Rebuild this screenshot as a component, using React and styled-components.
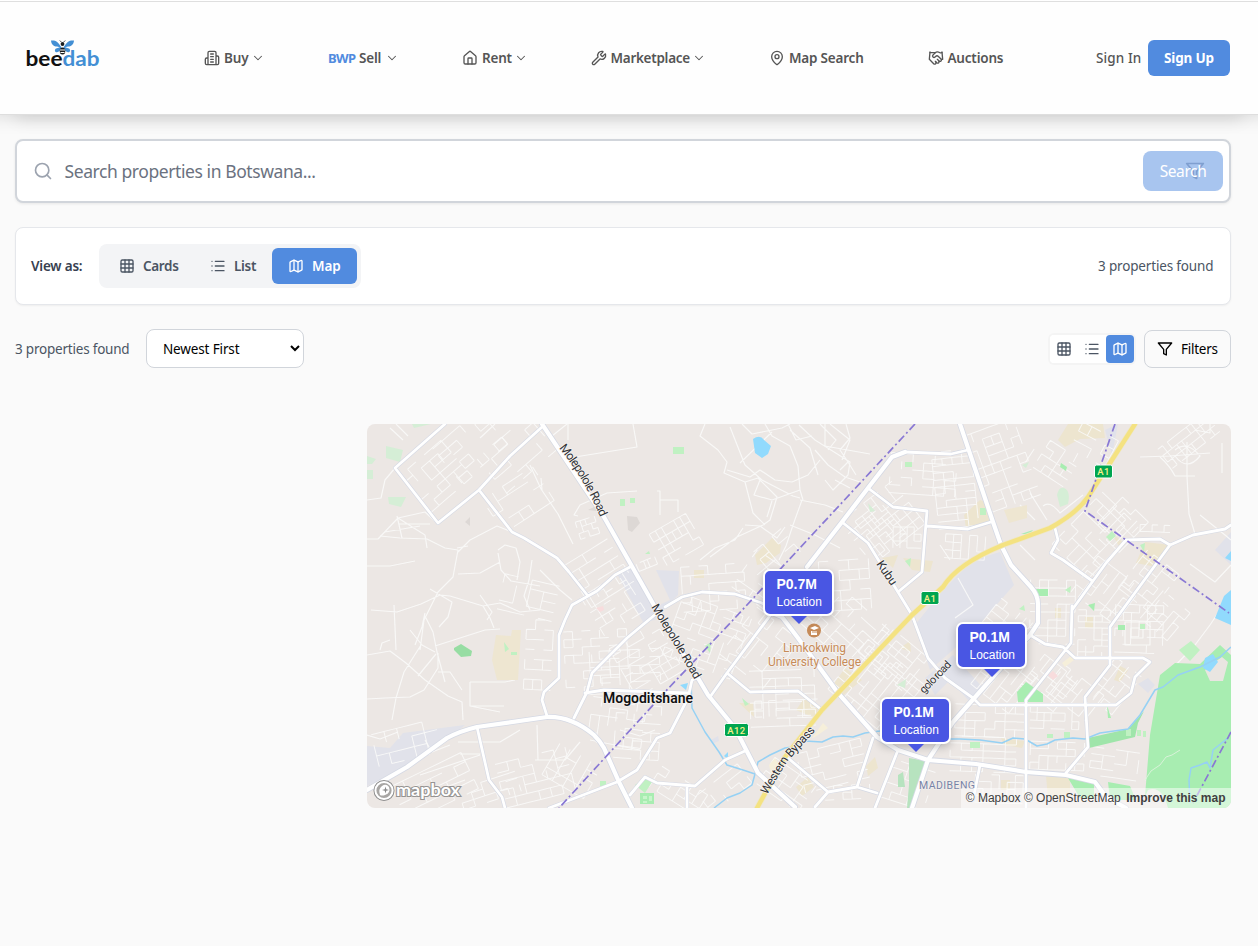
import React from "react";
import styled, { createGlobalStyle } from "styled-components";
import { ChevronDown, House, Wrench, MapPin, Handshake, Search, Grid3x3, List, Map as MapIcon } from "lucide-react";

const Global = createGlobalStyle`
  * { box-sizing: border-box; }
  body { margin: 0; background: #fafafa; color: #4b5563; font-family: "Noto Sans", "Open Sans", sans-serif; font-size: 13.5px; }
  button, select { font: inherit; }
`;
const Page = styled.div`height: 946px; overflow: hidden; background: #fafafa;`;
const Header = styled.header`
  height: 115px; display: flex; align-items: center; padding: 0 28px 0 16px;
  border-top: 1px solid #fff; border-bottom: 1px solid #dedede;
  background: linear-gradient(#dfdfdf, #dfdfdf) 0 0 / 100% 1px no-repeat, #fefefe;
  box-shadow: -16px 4px 16px rgba(0, 0, 0, 0.1), 16px 4px 16px rgba(0, 0, 0, 0.1);
`;
const LogoBox = styled.div`width: 188px; height: 95px; display: flex; align-items: center; svg { display: block; }`;
const Nav = styled.nav`display: flex; flex: 1;`;
const NavItem = styled.a`
  width: ${(p) => p.$width}px; display: flex; align-items: center; height: 20px; color: #555; font-weight: 600;
  svg { flex: none; }
`;
const Text = styled.span`
  width: ${(p) => p.$width}px; flex: none; white-space: nowrap; letter-spacing: ${(p) => p.$track || 0}px;
  margin-left: ${(p) => p.$left || 0}px;
`;
const ViewLabel = styled(Text)`color: #374151; font-weight: 600;`;
const Currency = styled.b`color: #518bdf; font-size: 13px; font-weight: 700; width: 31px; letter-spacing: -0.6px;`;
const SignIn = styled.a`width: 52px; color: #555; font-weight: 500; letter-spacing: 0.1px; white-space: nowrap;`;
const SignUp = styled.button`
  width: 82px; height: 36px; padding: 0; border: 0; border-radius: 6px; background: #518bdf; color: #fff; font-weight: 700; letter-spacing: -0.15px;
`;
const Main = styled.main`padding: 24px 27px 0 15px;`;
const SearchBar = styled.div`
  height: 64px; border: 2px solid #d1d5db; border-radius: 8px; background: #fff; display: flex; align-items: center;
  padding: 0 6px 0 16px; box-shadow: 0 1px 3px rgba(0, 0, 0, 0.08); color: #9ca3af;
`;
const Placeholder = styled.span`flex: 1; margin-left: 11.5px; font-size: 17.5px; letter-spacing: ${(p) => p.$track}px; color: #6b7280;`;
const SearchButton = styled.button`
  width: 80px; height: 40px; padding: 0; border: 0; border-radius: 8px; background: #a8c5ef; color: #fff; font-size: 15.5px; letter-spacing: -0.4px; position: relative;
  svg { position: absolute; left: 42px; top: 10px; color: #7f9fd0; }
  span { position: relative; z-index: 1; }
`;
const ViewCard = styled.section`
  margin-top: 24px; height: 78px; border: 1px solid #e5e7eb; border-radius: 8px; background: #fff; padding: 0 16px 0 15px;
  display: flex; align-items: center; box-shadow: 0 1px 2px rgba(0, 0, 0, 0.05);
`;
const Segments = styled.div`display: flex; padding: 4px; border-radius: 8px; background: #f3f4f6; height: 44px; width: 262px;`;
const Segment = styled.button`
  width: ${(p) => p.$width}px; border: 0; border-radius: 6px; padding: 0 0 0 16px; display: flex; align-items: center; gap: 8px;
  font-weight: 600; letter-spacing: ${(p) => p.$track}px;
  background: ${(p) => (p.$on ? "#518bdf" : "transparent")}; color: ${(p) => (p.$on ? "#fff" : "#4b5563")};
`;
const Spacer = styled.div`flex: 1;`;
const SortRow = styled.div`margin-top: 24px; height: 39px; display: flex; align-items: center;`;
const Select = styled.select`
  width: 158px; height: 39px; border: 1px solid #d1d5db; border-radius: 8px; background: #fff; color: #000; padding: 0 0 0 12px; letter-spacing: -0.14px;
`;
const IconGroup = styled.div`display: flex; border-radius: 4px; background: #fff; box-shadow: 0 0 0 2px #f4f4f4; margin-right: 10px;`;
const IconButton = styled.button`
  width: 28px; height: 28px; padding: 6px; border: 0; border-radius: 4px; display: flex;
  background: ${(p) => (p.$on ? "#518bdf" : "#fff")}; color: ${(p) => (p.$on ? "#fff" : "#4b5563")};
`;
const FilterButton = styled.button`
  width: 87px; height: 38px; padding: 0 0 0 12px; border: 1px solid #d1d5db; border-radius: 8px; background: transparent; color: #000;
  display: flex; align-items: center; gap: 8px; letter-spacing: -0.25px;
`;
const MapPanel = styled.section`
  position: relative; margin: 56px 0 0 352px; width: 864px; height: 384px; border-radius: 8px; overflow: hidden; background: #ece7e4;
  > svg { display: block; }
`;
const Pin = styled.div`
  position: absolute; left: ${(p) => p.$x}px; top: ${(p) => p.$y}px; width: 71px; height: 47px; border: 2px solid #fff; border-radius: 7px;
  background: #4956e3; color: #fff; padding: 4px 0 0 11.5px; font: 12px/17px "Liberation Sans", Arial, sans-serif; box-shadow: 0 3px 9px rgba(0,0,0,.22);
  b { display: block; font-size: 14px; line-height: 19px; }
  &::after { content: ""; position: absolute; left: 26px; top: 45px; border: 8px solid transparent; border-top-color: #4956e3; border-bottom: 0; }
`;
const Attribution = styled.div`
  position: absolute; right: 0; bottom: 0; height: 20px; padding: 0 5.5px 0 5px; background: rgba(255,255,255,.5); color: #404040;
  font: 12px/20px "Liberation Sans", Arial, sans-serif; white-space: nowrap; b { margin-left: 2px; }
`;

const Filter = ({ size = 16 }) => (
  <svg width={size} height={size} viewBox="0 0 24 24" fill="none" stroke="currentColor" strokeWidth="2" strokeLinecap="round" strokeLinejoin="round">
    <polygon points="22 3 2 3 10 12.46 10 19 14 21 14 12.46 22 3" />
  </svg>
);
const Building = () => (
  <svg width="16" height="16" viewBox="0 0 24 24" fill="none" stroke="currentColor" strokeWidth="2" strokeLinecap="round" strokeLinejoin="round">
    <path d="M6 22V4a2 2 0 0 1 2-2h8a2 2 0 0 1 2 2v18ZM6 12H4a2 2 0 0 0-2 2v6a2 2 0 0 0 2 2h2M18 9h2a2 2 0 0 1 2 2v9a2 2 0 0 1-2 2h-2M10 6h4M10 10h4M10 14h4M10 18h4" />
  </svg>
);
const Chevron = () => <ChevronDown size={14} strokeWidth={1.8} />;
const Logo = () => (
  <svg width="95" height="95" viewBox="16 10 95 95">
    <g fill="#438fd4">
      <path d="M61.5 47.5C58 41 55 40 51 40.5c.3 4 3 6 6 6l3 .7-4 1.2c-2 1.5-1 4 1 3.8 2-.2 3.5-2 4.5-4.7zM63.5 47.5C67 41 70 40 74 40.500c-.3 4-3 6-6 6l-3 .7 4 1.200c2 1.500 1 4-1 3.800-2-.2-3.500-2-4.500-4.700z" />
    </g>
    <g fill="#181b1d"><circle cx="62.5" cy="44" r="1.9" /><ellipse cx="62.5" cy="51" rx="2.8" ry="3.6" /></g>
    <path d="M61.3 42l-1.500-1.500M63.700 42l1.500-1.500" stroke="#222" strokeWidth=".8" />
    <path d="M60 50h5M60.5 52.500h4" stroke="#fff" />
    <text x="25.500" y="66" fontFamily="Lato, sans-serif" fontWeight="700" fontSize="20.5" textLength="37" lengthAdjust="spacingAndGlyphs" fill="#111">bee</text>
    <text x="62.500" y="66" fontFamily="Lato, sans-serif" fontWeight="700" fontSize="20.5" textLength="37" lengthAdjust="spacingAndGlyphs" fill="#438fd4">dab</text>
  </svg>
);

/* Residential street blocks: [x, y, width, height, angle, cell width, cell height, share of edges drawn] */
const blocks = [
  [410, 450, 60, 55, -41, 11, 8, 0.6], [440, 424, 60, 45, -41, 12, 9, 0.5], [485, 430, 70, 50, -41, 11, 9, 0.55], [490, 478, 65, 48, -33, 12, 10, 0.5],
  [578, 518, 24, 22, -18, 5, 6, 0.75], [575, 548, 50, 52, -32, 10, 10, 0.65], [590, 580, 52, 50, -32, 8, 9, 0.65], [565, 630, 70, 65, -3, 9, 8, 0.6],
  [500, 580, 60, 38, 13, 14, 9, 0.5], [525, 620, 34, 75, 3, 9, 10, 0.55], [590, 650, 70, 38, -3, 10, 8, 0.65], [590, 700, 55, 45, 8, 9, 9, 0.6],
  [620, 630, 60, 60, -30, 9, 8, 0.65], [615, 705, 45, 55, 4, 9, 9, 0.55], [395, 765, 90, 40, -26, 13, 10, 0.7], [500, 755, 72, 50, -14, 12, 9, 0.65],
  [545, 755, 58, 44, 30, 12, 9, 0.6], [460, 780, 60, 24, -18, 12, 7, 0.6], [375, 725, 75, 40, -14, 13, 11, 0.65],
  [655, 520, 48, 36, -30, 7, 9, 0.8], [637, 560, 20, 9, -22, 4, 8, 0.8], [682, 565, 65, 45, -4, 9, 9, 0.6], [670, 605, 75, 68, 20, 9, 8, 0.7],
  [740, 560, 50, 45, 35, 10, 9, 0.6], [750, 540, 48, 35, -40, 12, 10, 0.5], [820, 560, 52, 50, -4, 10, 10, 0.6], [810, 600, 70, 55, 42, 10, 9, 0.5],
  [730, 620, 60, 55, -52, 12, 11, 0.6], [750, 670, 70, 60, -2, 13, 8, 0.65], [755, 700, 65, 20, -2, 7, 8, 0.7], [860, 490, 60, 55, -38, 9, 9, 0.75],
  [890, 455, 70, 40, 4, 11, 8, 0.65], [855, 515, 45, 38, -40, 9, 9, 0.65], [893, 527, 28, 27, 1, 7, 7, 0.9], [935, 450, 48, 78, -6, 10, 7, 0.75],
  [945, 535, 40, 24, 4, 8, 8, 0.75], [975, 424, 60, 85, -20, 9, 9, 0.65], [1030, 445, 45, 34, 33, 9, 8, 0.65], [1070, 430, 45, 45, 28, 10, 10, 0.65],
  [1160, 428, 60, 28, -38, 6, 8, 0.8], [1060, 510, 72, 52, -46, 9, 10, 0.75], [1100, 505, 46, 38, -46, 7, 9, 0.75], [1140, 525, 35, 12, 2, 6, 7, 0.75],
  [1085, 560, 50, 60, -53, 9, 9, 0.75], [1030, 580, 50, 70, 1, 9, 8, 0.8], [980, 605, 55, 48, -52, 8, 8, 0.75], [1125, 560, 50, 42, -52, 8, 8, 0.7],
  [1078, 610, 36, 48, 1, 8, 6, 0.8], [1115, 605, 55, 48, 2, 8, 8, 0.75], [1148, 595, 42, 40, -50, 9, 7, 0.65], [845, 650, 65, 75, -51, 8, 9, 0.8],
  [875, 628, 45, 60, -51, 7, 9, 0.75], [1028, 660, 45, 42, -52, 8, 7, 0.8], [1060, 665, 38, 55, -52, 8, 7, 0.75], [1090, 667, 54, 35, -52, 8, 8, 0.75],
  [980, 655, 50, 48, -52, 8, 8, 0.8], [955, 705, 70, 32, 2, 10, 8, 0.8], [1030, 705, 52, 26, 2, 7, 8, 0.8], [950, 737, 74, 38, 2, 11, 7, 0.7],
  [1030, 742, 54, 34, 2, 9, 7, 0.75], [1090, 750, 52, 30, 8, 12, 7, 0.7], [975, 775, 50, 30, 2, 8, 7, 0.7], [800, 745, 70, 42, -14, 11, 8, 0.7],
  [760, 770, 55, 35, 35, 10, 8, 0.7], [885, 765, 48, 42, 18, 9, 8, 0.6], [825, 785, 50, 20, -3, 9, 7, 0.55], [650, 780, 60, 28, 32, 9, 8, 0.55],
  [700, 775, 55, 26, -38, 10, 8, 0.55],
];
function streetGrid([x, y, w, h, angle, cw, ch, share], seed) {
  let s = seed * 7919 + 13;
  const rnd = () => { s = (s * 1103515245 + 12345) % 2147483648; return s / 2147483648; };
  let d = "";
  for (let j = 0; j * ch <= h; j++)
    for (let i = 0; i * cw <= w; i++) {
      if (rnd() < share && (i + 1) * cw <= w) d += `M${i * cw} ${j * ch}h${cw}`;
      if (rnd() < share * 0.75 && (j + 1) * ch <= h) d += `M${i * cw} ${j * ch}v${ch}`;
    }
  return <path key={seed} d={d} transform={`translate(${x + w / 2} ${y + h / 2}) rotate(${angle}) translate(${-w / 2} ${-h / 2})`} />;
}
const tracks = `M395 468L385 480 381 498 367 500M367 539H378L398 518 425 512 437 523M380 536L400 538 427 539 445 548 458 550 453 577 438 592 424 620 420 650M398 518L425 535 427 548M457 548L468 546M458 552L470 540 497 526 512 532M399 524H430M385 532L420 526M397 516L402 538
M371 610L397 612 421 604 440 595 450 596 483 606 500 603 520 612 540 610M430 589L452 602 448 617 439 627M458 574L480 573 500 562M498 550L505 545 516 548 520 562 517 580M498 553L501 570 511 581 540 586M483 606L490 618 494 628M480 595L492 612 487 620M532 560L529 580 524 596 530 610M540 570L560 590 572 600
M367 655L390 651 406 663 425 680 448 696 462 702 463 720M367 699L385 698 410 697 424 690 438 668 438 653M425 613L422 627 415 645M425 616L433 632 437 652 445 682M435 646L485 630 500 629M367 735L380 739 398 732M380 650L382 643 390 640M470 682H505L515 680M470 682V706H504M470 706L500 712M410 630L422 645 435 652M421 645L404 672 396 698 392 720M436 654L418 676M438 672H450L462 690
M495 424L480 438M567 424L552 436M568 440V424M570 455L574 464M575 457L637 447 633 424M637 491L607 493 580 505 574 515 578 516M367 566H390L415 561M394 605L396 650M530 465L541 489 558 514 573 544M541 478L542 490M390 428L403 440M396 424L408 436
M705 424L700 436 718 450 727 462 724 473 745 482 758 478 777 497 770 520 763 525 737 537 710 557M730 427L745 465 762 480 793 496 800 498M765 424L772 436 790 446 798 466 800 490 803 500M799 425L815 440 850 462 848 475 833 490 825 480M830 424L850 440 842 460M790 430L810 448 818 475M800 500L825 505 843 512M745 482L753 513 765 525M802 500L793 525 786 546 779 560M740 463L772 432M657 491H660L660 515M660 500H678V512
M727 470L750 477 760 470 775 480 792 482 808 475 820 460M760 480L754 495 772 500 800 490M772 501L767 517M815 450L828 465 845 477 860 482M840 470L848 462 856 475M835 480L850 488M846 424L850 438 840 450 848 462M820 424L836 440 828 450M788 424L796 440 812 436M742 424L752 434 782 428 790 424
M745 525L760 526 777 538 785 527M743 528L735 540 715 548 700 560M790 525L815 535 840 548M825 424V446L870 454
M1140 457L1170 456 1210 453M1187 442V476M1160 457Q1170 466 1175 476H1195M1187 476L1189 514 1195 534M1222 443V473M1210 424V433L1195 430M1175 450Q1187 440 1200 456Q1187 472 1175 456M1200 515L1225 535 1231 540M1190 564L1215 582 1231 565M958 578L973 605 955 618
M1171 670L1195 645 1210 625 1220 610M940 545L950 560M1020 545L1035 560M1083 495L1060 513Q1050 500 1043 506M1020 505L1035 520M1030 493L1047 520M1145 780L1160 765 1170 755 1180 750M425 740L432 752 450 745M458 742H500L520 730M460 754H480M537 725L538 760M590 740L640 750M620 730L640 736 655 730M535 760L565 760 580 742M420 775L480 755M430 793L465 780M1125 622H1150V645H1125ZM1131 628H1143V638H1131Z`;
const roads = `M445 424L395 468 438 523 479 490 510 456 542 427M479 490L512 532 524 538 557 558 569 572 588 596M630 567L615 575 597 591 572 605 565 620 559 635 559 678 544 692 542 700 547 716M477 727L489 780 502 797 505 808M657 613L627 638 592 673 587 692 574 718M585 693L604 690 657 692 688 693M549 808L617 782 637 770 657 738 670 733 688 698 692 680 697 678M630 795L645 777 657 783 695 786 725 760 745 751M687 787V808
M665 607L682 597 702 592 735 594 762 603 782 617M772 613L727 673 710 697M868 488L893 507 927 511 922 572 898 592M927 526L968 529 991 522M842 522L868 543 912 615 928 658 945 678 973 698 980 705H1116L1131 693 1135 677 1150 662 1143 658H1075L1063 647 1045 644 1030 635M1072 610L1106 563 1126 540 1160 539 1170 545M1072 606L1071 643 1026 700V808M1231 525L1225 529 1193 535 1170 545 1115 620 1110 627V665L1085 697 1088 747 1066 773M1055 528L1058 540 1051 553 1063 560 1091 580M727 673L750 692 798 691 822 710M788 758L828 792 857 787 877 793M873 738L857 787M828 792L815 807M898 750L875 808M980 765L973 800M892 457L905 452 951 454 968 450`;
const highways = `M542 424L604 517 655 607 698 678 708 695 735 728 758 773 795 807M367 790L407 767 447 738 Q460 731 477 727L547 717Q571 716 594 735 600 741 604 748L619 782 632 808M770 612L782 617 798 638 838 693 877 737 898 750 928 760 976 764 1026 772 1066 775 1095 782 1106 797 1126 808M807 567L842 522 868 488 892 457 905 452M960 424L993 522 1001 545 1011 565 1031 587Q1038 595 1038 604V623L1030 635 993 677 953 722 928 760 912 808`;
const expressway = "M1135 424L1110 463 1088 497Q1077 513 1050 528L1003 545Q957 564 943 587L912 615 822 710 785 757 757 808";
const boundary = "M915 424L733 620 665 692 559 808M1115 424L1085 511 1229 613M1231 732L1193 803";
const river = "M691 680L692 708 705 732 719 752 727 765 743 770 755 774 758 762 770 755 785 748 800 746 805 741 822 742 833 737 843 736 853 737 865 733 880 731M945 739L960 739 980 740 1002 743 1013 738 1025 739 1037 746 1047 744 1055 740 1073 738 1085 739 1100 733 1128 729 1140 715 1155 690 1163 687 1178 675 1200 667 1220 657 1231 647M755 774L752 785 740 793 727 798 714 808M1190 803L1189 780 1191 768 1200 765 1207 762 1210 768 1213 750 1218 746 1228 738";

const Shield = ({ x, y, w = 18, children }) => (
  <g><rect x={x} y={y} width={w} height="13" rx="2" fill="#00a550" stroke="#fff" />
    <text x={x + w / 2} y={y + 10} textAnchor="middle" fill="#f7ee8a" fontSize="9.5" fontWeight="500" letterSpacing=".4">{children}</text></g>
);
const label = { stroke: "#f6f3f1", strokeWidth: 1.5, paintOrder: "stroke", strokeLinejoin: "round" };

const CityMap = () => (
  <svg width="864" height="384" viewBox="367 424 864 384" fontFamily="Roboto, sans-serif">
    <defs>
      <path id="molepolole-north" d="M559 448Q584 478 601 519" />
      <path id="molepolole-south" d="M651 607L676 648 696 682" />
      <path id="western" d="M767 795L787 762 817 729" />
      <path id="kubu" d="M876 564L893 589" />
      <path id="segogolo" d="M924 694L953 664" />
    </defs>
    <path fill="#e1e2ea" d="M616 572L632 566 655 607 670 600 656 570 679 571 678 595 667 606 655 620 643 622ZM943 590L973 560 1000 552 1014 585 970 635 930 670 915 625ZM367 746L390 748 403 733 465 725 447 740 405 770 367 786ZM925 678L953 655 985 690 968 700 950 680 935 695ZM1215 550L1231 532V565ZM1138 684L1148 678 1155 685 1148 693ZM1105 430L1118 424 1112 455ZM711 740L718 736 719 741 712 744Z" />
    <path fill="#ede5cf" d="M755 555L772 538 781 545 780 553 766 563 757 565ZM1068 424H1103L1105 438 1080 439 1065 447 1058 440ZM964 515L980 500 989 503 992 521 966 528ZM1136 563L1145 542 1170 545 1156 567ZM882 558L898 555 893 568ZM903 558L933 561 930 572 912 570ZM833 685L845 668 862 680 840 698ZM796 710L805 697 822 710 815 718ZM739 703L753 703 754 717ZM866 766L875 757 878 768 868 776ZM796 787L808 777 814 787 802 796ZM1046 776H1070V798H1048ZM1114 680L1120 666 1128 670 1120 682ZM694 570H704V578H694ZM1085 617H1093V628H1085ZM1001 738L1025 741 1022 748 1004 745ZM1111 532L1125 544 1120 548ZM1055 608H1061V618H1055ZM1001 780H1010V790H1001ZM900 648L910 641 911 652Z" />
    <g fill="none" stroke="#faf9f8" strokeWidth="1" strokeOpacity=".9">{blocks.map((b, i) => streetGrid(b, i + 1))}<path d={tracks} strokeWidth="1.2" strokeLinejoin="round" /></g>
    <path fill="#eee6d1" d="M496 635L511 636 512 630H521L518 680H497L492 660ZM1004 510L1027 505V518L1009 523Z" />
    <path fill="#f6efda" d="M812 738L823 723 828 728 815 737ZM769 765L775 758 782 768 771 774ZM1062 663L1071 656 1074 660 1065 667Z" />
    <path fill="#f8dcdd" d="M596 608L603 606 604 610 600 612ZM1048 675L1053 671 1058 676 1053 680Z" />
    <path fill="#d5eed6" d="M386 446L403 450 400 462 386 458ZM388 497H406L401 507 389 504ZM367 456L376 459 372 464H367ZM367 470H373V479H367ZM412 424H431L414 428ZM868 503L875 511 870 512ZM1057 495Q1059 486 1064 488Q1071 491 1068 504L1060 507ZM1022 465L1029 462 1026 468ZM897 685L906 679 905 688Z" />
    <path fill="#c0f1c2" d="M673 447H684V454H673ZM620 499H625V506H620ZM630 498H635V503H630ZM504 642L509 649 505 652ZM511 652H517V655H511ZM645 554L649 551 650 554ZM905 462H912V467H905ZM980 508H986V515H980ZM1106 537L1112 531 1116 536 1110 541ZM1140 545L1145 543 1144 552ZM705 646L711 642 710 653ZM742 698L749 704 745 706ZM970 742H980V748H970ZM1064 732H1070V738H1064ZM1047 734H1053V738H1047ZM1179 650L1191 641 1200 650 1190 661ZM635 785L647 776 652 782 645 793ZM600 781H606V786H600ZM905 561L911 558 910 567ZM1065 590L1071 586 1070 593ZM1019 609L1024 605 1025 611ZM1140 624H1145V629H1140Z" />
    <path d="M909 758L926 761 920 782 913 808H907L909 785ZM898 775L903 772 905 787H898Z" fill="#b7e3bf" />
    <path fill="#a8edb1" d="M1160 675L1175 663 1200 664 1220 645 1231 655V808H1144L1150 735ZM1017 692L1026 682 1043 694V702H1018ZM1068 778L1094 780V798H1080ZM1108 782L1130 786 1136 800H1110ZM640 793H654V804H640ZM1036 589H1048V596H1036ZM1061 463L1067 467 1066 471 1060 467ZM1021 534L1033 530 1030 534ZM1118 625H1125V630H1118ZM1088 605L1095 603 1094 611ZM1107 705L1111 718 1108 718Z" />
    <path fill="#9fe5aa" d="M1088 738L1128 729 1139 717 1144 711 1138 723 1135 737 1089 748Z" />
    <path d="M1126 729h5v7h-5zM1137 730h4v6h-4zM1143 731h3v6h-3z" fill="#c0f1c2" />
    <path fill="#97dda3" d="M454 648L461 644 472 651 471 656 461 657 454 650Z" />
    <path d="M643 796h4v3h-4zM649 796h3v5h-3zM643 801h4v2h-4z" fill="#c8f5cb" />
    <path d="M1205 670L1212 664 1222 657 1228 662 1223 681H1210ZM1148 790Q1162 785 1168 808H1140Z" fill="#e9e5e1" />
    <path d="M627 516L637 517 640 523 632 532 628 530ZM465 522L470 517V526ZM588 510L596 506V511Z" fill="#ddd8d5" />
    <path d="M753 439Q760 434 764 440L771 446 768 454 762 458 755 453ZM1205 658L1213 654 1218 662 1210 672 1203 668ZM1215 618L1224 596 1231 590V625ZM1225 558L1231 551V561ZM680 685L688 683 686 690ZM724 756L728 752V759Z" fill="#91dafd" />
    <path d={river} fill="none" stroke="#96d1f4" strokeWidth="1.5" strokeLinejoin="round" />
    <path d="M1145 780L1151 771 1160 765 1166 757 1172 755 1180 750" fill="none" stroke="#d8f2d9" strokeWidth="1" />
    <g fill="none" strokeLinejoin="round" strokeLinecap="round">
      <path d={roads} stroke="#d5d9e4" strokeWidth="4" /><path d={highways} stroke="#d5d9e4" strokeWidth="5.8" />
      <path d={roads} stroke="#fff" strokeWidth="2.8" /><path d={highways} stroke="#fff" strokeWidth="4.2" />
      <path d={expressway} stroke="#eee7ca" strokeWidth="5.8" /><path d={expressway} stroke="#f4e281" strokeWidth="4.4" />
    </g>
    <path d={boundary} fill="none" stroke="#8978d4" strokeWidth="1.7" strokeDasharray="8 3 2 3" />
    <Shield x={1094.5} y={465}>A1</Shield><Shield x={921} y={591.5}>A1</Shield><Shield x={724.5} y={723.5} w={24}>A12</Shield>
    <g fill="#303236" fontSize="12" {...label}>
      <text><textPath href="#molepolole-north" textLength="81">Molepolole Road</textPath></text>
      <text><textPath href="#molepolole-south" textLength="85">Molepolole Road</textPath></text>
      <text><textPath href="#western" textLength="81">Western Bypass</textPath></text>
      <text><textPath href="#kubu" textLength="27">Kubu</textPath></text>
      <text fontSize="11"><textPath href="#segogolo" textLength="40">golo road</textPath></text>
    </g>
    <text x="603" y="703" fontSize="14" fontWeight="600" textLength="90" fill="#101012" {...label}>Mogoditshane</text>
    <text x="919" y="789" fontSize="10.5" textLength="56" fill="#7682a6" {...label} strokeWidth="1">MADIBENG</text>
    <g fill="#c68b59" fontSize="12" {...label} strokeWidth="1.5"><text x="783" y="652" textLength="63">Limkokwing</text><text x="768" y="666" textLength="93">University College</text></g>
    <circle cx="814" cy="630.5" r="7" fill="#c68b59" /><path d="M810 628l5-2 4 2-5 2zM811 631v4h6v-4" fill="#fff" /><path d="M812 632h5" stroke="#c68b59" />
    <circle cx="384" cy="790.5" r="9.8" fill="#a8a6a4" stroke="#909090" strokeWidth="1.5" /><circle cx="384" cy="790.5" r="8.6" fill="#a8a6a4" stroke="#fff" strokeWidth="2" />
    <path d="M380 795Q378 789 382 786Q386 783 389 787Q391 793 385 795Q382 796 380 795Z" fill="#fff" /><path d="M385.5 786.5l.8 2.7 2.7.8-2.7.8-.8 2.7-.8-2.7-2.7-.8 2.7-.8z" fill="#8c8c8c" />
    <text x="396" y="796" fontSize="17" fontWeight="700" fontFamily="Lato, sans-serif" textLength="64" lengthAdjust="spacingAndGlyphs" fill="#fff" stroke="#969492" strokeWidth="2.2" paintOrder="stroke">mapbox</text>
  </svg>
);

export default function App() {
  return (
    <Page>
      <Global />
      <Header>
        <LogoBox><Logo /></LogoBox>
        <Nav>
          <NavItem $width={124}><Building /><Text $left={4} $width={27} $track={-0.15}>Buy</Text><Chevron /></NavItem>
          <NavItem $width={134}><Currency>BWP</Currency><Text $width={26} $track={-0.2}>Sell</Text><Chevron /></NavItem>
          <NavItem $width={129}><House size={16} /><Text $left={4} $width={32} $track={-0.2}>Rent</Text><Chevron /></NavItem>
          <NavItem $width={178}><Wrench size={16} /><Text $left={3.5} $width={81.5} $track={-0.28}>Marketplace</Text><Chevron /></NavItem>
          <NavItem $width={159}><MapPin size={16} /><Text $left={4} $width={78} $track={-0.2}>Map Search</Text></NavItem>
          <NavItem $width={168}><Handshake size={16} /><Text $left={3.5} $width={60} $track={-0.2}>Auctions</Text></NavItem>
        </Nav>
        <SignIn>Sign In</SignIn><SignUp>Sign Up</SignUp>
      </Header>
      <Main>
        <SearchBar><Search size={20} /><Placeholder $track={-0.42}>Search properties in Botswana...</Placeholder><SearchButton><Filter size={20} /><span>Search</span></SearchButton></SearchBar>
        <ViewCard>
          <ViewLabel $width={68} $track={-0.2}>View as:</ViewLabel>
          <Segments>
            <Segment $width={91} $track={-0.35}><Grid3x3 size={16} />Cards</Segment>
            <Segment $width={78} $track={-0.3}><List size={16} />List</Segment>
            <Segment $width={85} $track={-0.1} $on><MapIcon size={16} />Map</Segment>
          </Segments>
          <Spacer /><Text $width={116} $track={-0.16}>3 properties found</Text>
        </ViewCard>
        <SortRow>
          <Text $width={131} $track={-0.21}>3 properties found</Text>
          <Select defaultValue="new"><option value="new">Newest First</option></Select>
          <Spacer />
          <IconGroup><IconButton><Grid3x3 size={16} /></IconButton><IconButton><List size={16} /></IconButton><IconButton $on><MapIcon size={16} /></IconButton></IconGroup>
          <FilterButton><Filter />Filters</FilterButton>
        </SortRow>
        <MapPanel>
          <CityMap />
          <Pin $x={396} $y={145}><b>P0.7M</b>Location</Pin>
          <Pin $x={589} $y={198}><b>P0.1M</b>Location</Pin>
          <Pin $x={513} $y={273}><b>P0.1M</b>Location</Pin>
          <Attribution>© Mapbox © OpenStreetMap <b>Improve this map</b></Attribution>
        </MapPanel>
      </Main>
    </Page>
  );
}
